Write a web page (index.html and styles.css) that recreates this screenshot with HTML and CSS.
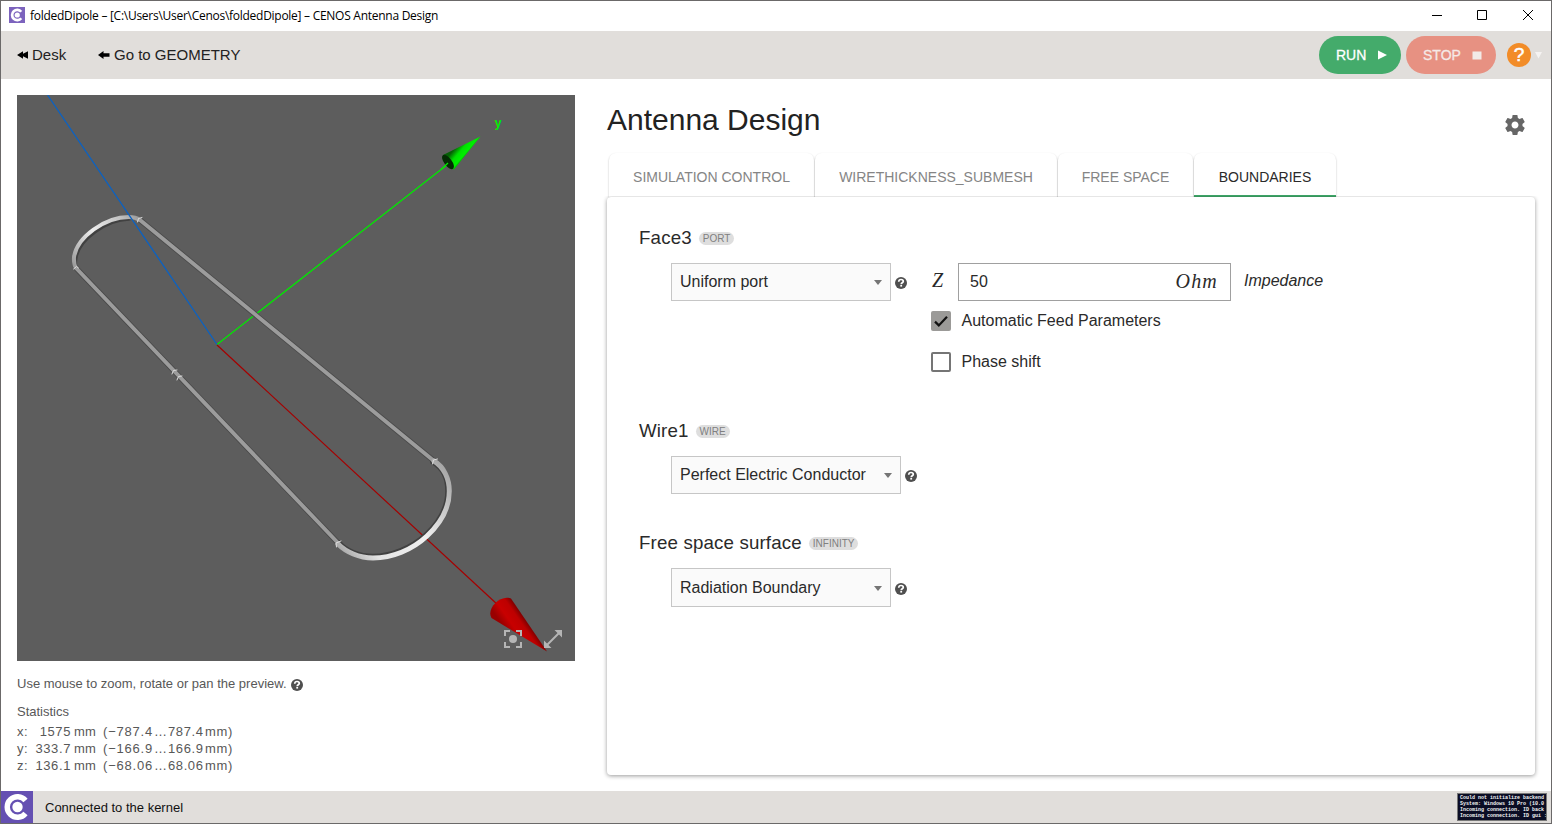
FILE: index.html
```html
<!DOCTYPE html>
<html lang="en">
<head>
<meta charset="utf-8">
<title>foldedDipole – CENOS Antenna Design</title>
<link rel="stylesheet" href="styles.css">
</head>
<body>
<svg class="defs" width="0" height="0">
  <symbol id="help" viewBox="0 0 12 12">
    <circle cx="6" cy="6" r="6" fill="#4f4f4f"/>
    <path d="M3.700 4.700C3.800 3.200 4.800 2.500 6 2.500c1.300 0 2.300.7 2.300 1.800 0 1.500-2.100 1.500-2.100 3" fill="none" stroke="#fff" stroke-width="1.700"/>
    <rect x="5.300" y="8" width="1.800" height="1.600" fill="#fff"/>
  </symbol>
  <symbol id="logo" viewBox="0 0 32 32">
    <path d="M24.500 9.500A10.300 10.300 0 1 0 24.500 22.500" fill="none" stroke="#fff" stroke-width="5.400"/>
    <circle cx="16.500" cy="16" r="5.200" fill="#fff"/>
  </symbol>
</svg>
<div class="window">
  <header class="titlebar">
    <svg class="app-icon" viewBox="0 0 32 32"><rect width="32" height="32" fill="#7c63bd"/><use href="#logo"/></svg>
    <span class="title">foldedDipole – [C:\Users\User\Cenos\foldedDipole] – CENOS Antenna Design</span>
    <svg class="win-buttons" width="103" height="12" viewBox="0 0 103 12" fill="none" stroke="#000">
      <path d="M0 6.500h10M45.500 1.500h9v9h-9zM91 1l10 10M101 1L91 11"/>
    </svg>
  </header>
  <nav class="toolbar">
    <a class="nav-link desk"><svg width="11" height="8" viewBox="0 0 11 8"><path d="M0 4L6 .3v2.400L11 .3v7.400L6 5.300v2.400z"/></svg>Desk</a>
    <a class="nav-link"><svg width="12" height="8" viewBox="0 0 12 8"><path d="M0 4L5.500 0v2.200H11.500v3.600H5.500V8z"/></svg>Go to GEOMETRY</a>
    <div class="actions">
      <button class="pill run">RUN<svg width="9" height="10" viewBox="0 0 9 10"><path d="M0 .5L9 5 0 9.500z" fill="#fff"/></svg></button>
      <button class="pill stop">STOP<svg width="10" height="9" viewBox="0 0 10 9"><path d="M.5.5h9v8h-9z" fill="#f2eae7"/></svg></button>
      <span class="help-badge">?</span>
      <svg class="caret" width="7" height="7" viewBox="0 0 7 7"><path d="M0 0h7L3.500 6.500z" fill="#f5f3f2"/></svg>
    </div>
  </nav>
  <main class="content">
    <aside class="preview">
      <svg class="scene" width="558" height="566" viewBox="17 95 558 566">
        <defs>
          <linearGradient id="arcA" x1="74" y1="268" x2="140" y2="218" gradientUnits="userSpaceOnUse"><stop offset="0" stop-color="#999"/><stop offset=".45" stop-color="#eee"/><stop offset=".8" stop-color="#c4c4c4"/><stop offset="1" stop-color="#999"/></linearGradient>
          <linearGradient id="arcB" x1="450" y1="470" x2="345" y2="560" gradientUnits="userSpaceOnUse"><stop offset="0" stop-color="#a4a4a4"/><stop offset=".45" stop-color="#f0f0f0"/><stop offset=".8" stop-color="#e4e4e4"/><stop offset="1" stop-color="#a4a4a4"/></linearGradient>
          <linearGradient id="coneG" x1="456" y1="147" x2="469" y2="158" gradientUnits="userSpaceOnUse"><stop offset="0" stop-color="#066006"/><stop offset=".35" stop-color="#00e000"/><stop offset=".65" stop-color="#00f000"/><stop offset="1" stop-color="#043f04"/></linearGradient>
          <linearGradient id="coneR" x1="503" y1="626" x2="526" y2="610" gradientUnits="userSpaceOnUse"><stop offset="0" stop-color="#900"/><stop offset=".3" stop-color="#c80000"/><stop offset=".6" stop-color="#bd0000"/><stop offset="1" stop-color="#3c0000"/></linearGradient>
        </defs>
        <rect x="17" y="95" width="558" height="566" fill="#5d5d5d"/>
        <path d="M217 344.500L452 161" stroke="#00ea00" stroke-width="1.300"/>
        <path d="M217 345L498 605" stroke="#a60000" stroke-width="1.200"/>
        <g fill="none" stroke-linecap="round">
          <g stroke="#414141" stroke-width="5.500">
            <path d="M140 220L434 461" stroke="#4a4a4a"/>
            <path d="M76 268L339 544" stroke="#4a4a4a"/>
            <path d="M75 266C74.500 263 75 260 75.500 257C79 239 106 219 129 218.500" stroke-width="4.500"/>
            <path d="M433 462C443 468 448 479 448 491C448 507 440 522 426 535C411 548.500 391 556.500 373 556.500C359 556.500 346 551 339 543"/>
          </g>
          <g stroke="#9c9c9c" stroke-width="3.900">
            <path d="M140 220L434 461"/>
            <path d="M76 268L339 544"/>
          </g>
          <path d="M76 268C74 265 73.700 262 74 257C77 237 105 217 129 217C133 217 137 218 140 220" stroke="url(#arcA)" stroke-width="4"/>
          <path d="M434 461C444 467 449.300 479 449.300 491C449.300 507 441 523 427 536C412 550 392 558 373 558C359 558 346 552 338 544" stroke="url(#arcB)" stroke-width="5"/>
          <path d="M137.500 222l1-3.500 3.500-1M73.500 269l3-2.500 2 1.500M172 374l1.500-3.500 3.500-.500M177 380l1.500-3.500 3.500-.5M432.500 464l1-4 4-1M336.500 547l-.5-4 5-2" stroke="#ddd" stroke-width="1"/>
        </g>
        <path d="M47.500 95L217 344.500" stroke="#0a62c4" stroke-width="1.300"/>
        <path d="M443 155L480.500 136.500 454 169.500C449 169 442 161 443 155z" fill="url(#coneG)"/>
        <ellipse cx="448" cy="162" rx="3.800" ry="8.600" transform="rotate(-37 448 162)" fill="#032c03"/>
        <path d="M441 169.500L448 163" stroke="#00ea00" stroke-width="1.300"/>
        <path d="M491.500 618C486 609 500 594 511 598.500L547 651.500z" fill="url(#coneR)"/>
        <text class="axis-label" x="494.500" y="127">y</text>
        <g fill="none" stroke="#b5b5b5" stroke-width="2">
          <path d="M505 636v-5h5M516 631h5v5M521 642v5h-5M510 647h-5v-5"/>
          <path d="M547 645L559 633"/>
        </g>
        <circle cx="513" cy="639" r="4" fill="#b5b5b5"/>
        <path d="M554.500 630h7.500v7.500zM544 640.500v7.500h7.500z" fill="#b5b5b5"/>
      </svg>
      <p class="hint">Use mouse to zoom, rotate or pan the preview.<svg width="12" height="12"><use href="#help"/></svg></p>
      <p class="stats-title">Statistics</p>
      <div class="stats">
        <span>x:</span><b>1575</b><i>mm</i><span class="from">(−787.4</span><span>…</span><span>787.4</span><span class="unit">mm)</span>
        <span>y:</span><b>333.7</b><i>mm</i><span class="from">(−166.9</span><span>…</span><span>166.9</span><span class="unit">mm)</span>
        <span>z:</span><b>136.1</b><i>mm</i><span class="from">(−68.06</span><span>…</span><span>68.06</span><span class="unit">mm)</span>
      </div>
    </aside>
    <section class="settings">
      <div class="heading">
        <h1>Antenna Design</h1>
        <svg class="gear" width="24" height="24" viewBox="0 0 24 24"><path fill="#666" d="M19.430 12.980c.040-.320.070-.640.070-.980s-.030-.660-.070-.980l2.110-1.650c.190-.150.240-.420.120-.640l-2-3.460c-.120-.220-.390-.300-.610-.220l-2.490 1c-.520-.400-1.080-.730-1.690-.980l-.380-2.650C14.460 2.180 14.250 2 14 2h-4c-.250 0-.460.180-.490.420l-.380 2.650c-.610.250-1.170.590-1.690.980l-2.490-1c-.230-.090-.490 0-.610.220l-2 3.460c-.130.220-.070.490.120.640l2.110 1.650c-.040.320-.070.650-.070.980s.030.660.070.980l-2.110 1.650c-.190.150-.240.420-.120.640l2 3.460c.120.220.390.300.610.220l2.490-1c.520.400 1.080.730 1.690.980l.380 2.650c.030.240.240.420.490.420h4c.250 0 .460-.180.490-.420l.380-2.650c.610-.250 1.170-.590 1.690-.980l2.490 1c.230.090.490 0 .610-.220l2-3.460c.120-.220.070-.490-.120-.640l-2.110-1.650zM12 15.500c-1.930 0-3.500-1.570-3.500-3.500s1.570-3.500 3.500-3.500 3.500 1.570 3.500 3.500-1.570 3.500-3.500 3.500z"/></svg>
      </div>
      <div class="tabs">
        <div class="tab">SIMULATION CONTROL</div>
        <div class="tab">WIRETHICKNESS_SUBMESH</div>
        <div class="tab">FREE SPACE</div>
        <div class="tab active">BOUNDARIES</div>
      </div>
      <div class="card">
        <section class="group port">
          <h3>Face3<span class="tag">PORT</span></h3>
          <div class="fields">
            <div class="select">Uniform port<span class="arrow"></span></div>
            <svg class="info" width="12" height="12"><use href="#help"/></svg>
            <div class="params">
              <div class="impedance"><span class="math">Z</span><div class="input"><span>50</span><span class="math ohm">Ohm</span></div><em>Impedance</em></div>
              <label class="check"><span class="box on"><svg width="20" height="20" viewBox="0 0 20 20"><path d="M4 10.600l3.800 3.800L16 5.800" fill="none" stroke="#111" stroke-width="2.200"/></svg></span>Automatic Feed Parameters</label>
              <label class="check"><span class="box"></span>Phase shift</label>
            </div>
          </div>
        </section>
        <section class="group wire">
          <h3>Wire1<span class="tag">WIRE</span></h3>
          <div class="fields">
            <div class="select wide">Perfect Electric Conductor<span class="arrow"></span></div>
            <svg class="info" width="12" height="12"><use href="#help"/></svg>
          </div>
        </section>
        <section class="group surface">
          <h3>Free space surface<span class="tag">INFINITY</span></h3>
          <div class="fields">
            <div class="select tall">Radiation Boundary<span class="arrow"></span></div>
            <svg class="info" width="12" height="12"><use href="#help"/></svg>
          </div>
        </section>
      </div>
    </section>
  </main>
  <footer class="statusbar">
    <svg width="32" height="32" viewBox="0 0 32 32"><rect width="32" height="32" fill="#6550b2"/><use href="#logo"/></svg>
    <span class="status">Connected to the kernel</span>
    <div class="console"><div>Could not initialize backend</div><div>System: Windows 10 Pro (10.0</div><div>Incoming connection. ID back</div><div>Incoming connection. ID gui :</div></div>
  </footer>
</div>
</body>
</html>
```

FILE: styles.css
```css
* { box-sizing: border-box; }
body { margin: 0; width: 1552px; height: 824px; overflow: hidden; font-family: "Liberation Sans", Arial, sans-serif; color: #2a2a2a; }
h1, h3, p { margin: 0; font-weight: 400; }
.defs { display: block; }
svg { flex: none; }
.window { width: 1552px; height: 824px; border: 1px solid #6b6969; background: #fff; display: flex; flex-direction: column; }
.titlebar { height: 30px; flex: none; display: flex; align-items: center; padding: 0 16px 2px 8px; }
.app-icon { width: 16px; height: 16px; }
.title { margin: 1px 0 0 5px; font: 12px "Open Sans", "Noto Sans", sans-serif; letter-spacing: -.27px; color: #000; white-space: nowrap; }
.win-buttons { margin-left: auto; }
.toolbar { height: 48px; flex: none; display: flex; align-items: center; background: #e1dedb; padding: 0 9px 0 16px; font-size: 15px; color: #222; }
.nav-link { display: flex; align-items: center; gap: 4px; margin-top: -2px; }
.nav-link svg { margin-top: 1px; }
.desk { width: 81px; }
.actions { margin-left: auto; display: flex; align-items: center; }
.pill { height: 38px; border: 0; border-radius: 19px; font: 500 14px "Liberation Sans", sans-serif; color: #fff; display: flex; align-items: center; padding: 0 0 0 17px; -webkit-text-stroke: .3px currentColor; }
.run { width: 82px; background: #44ab6b; gap: 12px; }
.stop { width: 90px; margin-left: 5px; background: #e79182; gap: 11px; color: #f5e9e6; }
.help-badge { width: 24px; height: 24px; margin-left: 11px; border-radius: 50%; background: #f28c28; color: #fff; font-size: 19px; line-height: 24px; text-align: center; -webkit-text-stroke: .5px #fff; }
.caret { margin-left: 4px; }
.content { flex: 1; display: flex; padding: 16px; gap: 32px; }
.preview { width: 558px; font-size: 13px; color: #585858; }
.scene { display: block; }
.axis-label { font: bold 12px "Liberation Mono", monospace; fill: #00f000; }
.hint { display: flex; align-items: center; gap: 4px; height: 16px; margin-top: 15px; padding-bottom: 1px; }
.hint svg { margin-top: 2px; }
.stats-title { margin-top: 12px; height: 16px; line-height: 16px; }
.stats { margin-top: 3px; display: grid; grid-template-columns: 13px 41px 32px 51px 14px 37px 30px; grid-auto-rows: 17px; line-height: 17px; letter-spacing: .6px; white-space: nowrap; }
.stats b { font-weight: 400; text-align: right; }
.stats i { font-style: normal; padding-left: 3px; letter-spacing: .2px; }
.stats .from { letter-spacing: .8px; }
.stats .unit { letter-spacing: .7px; }
.settings { width: 928px; display: flex; flex-direction: column; }
.heading { height: 58px; display: flex; justify-content: space-between; padding: 7px 8px 0 0; }
h1 { font-size: 30px; line-height: 35px; color: #222; }
.gear { margin-top: 11px; }
.tabs { display: flex; gap: 1px; padding-left: 2px; height: 44px; }
.tab { height: 44px; width: 205px; border-radius: 7px 7px 0 0; background: #fff; box-shadow: 0 1px 2px rgba(0,0,0,.28); font-size: 14px; line-height: 48px; text-align: center; color: #858585; }
.tab:nth-child(2) { width: 242px; }
.tab:nth-child(3) { width: 135px; }
.tab:nth-child(4) { width: 142px; }
.tab.active { color: #2a2a2a; border-bottom: 2px solid #3da366; }
.card { height: 578px; background: #fff; border-radius: 4px; box-shadow: 0 1px 4px rgba(0,0,0,.4); clip-path: inset(-1px -6px -8px -6px); padding: 29px 32px; }
.group.port { height: 193px; }
.group.wire { height: 112px; }
h3 { font-size: 18.720px; line-height: 24px; height: 24px; display: flex; align-items: center; letter-spacing: .15px; }
.tag { margin: 1px 0 0 7px; height: 13px; border-radius: 7px; padding: 0 4px; background: #dedede; color: #808080; font-size: 10px; line-height: 13px; letter-spacing: 0; }
.fields { display: flex; margin: 13px 0 0 32px; font-size: 16px; }
.select { width: 220px; height: 38px; border: 1px solid #c6c6c6; background: #fafafa; display: flex; align-items: center; justify-content: space-between; padding: 0 8px; }
.wide { width: 230px; }
.tall { height: 39px; }
.arrow { border: 4.500px solid transparent; border-top: 5px solid #757575; border-bottom: 0; margin-top: 1px; }
.info { margin: 14px 0 0 4px; }
.surface .info { margin-top: 15px; }
.params { margin-left: 24px; }
.impedance { display: flex; height: 38px; align-items: center; }
.math { font: italic 20px "Liberation Serif", serif; width: 27px; padding-left: 1px; line-height: 32px; height: 36px; }
.input { width: 273px; height: 38px; border: 1px solid #a0a0a0; display: flex; align-items: center; justify-content: space-between; padding: 0 12px 0 11px; }
.ohm { width: auto; letter-spacing: 1.200px; padding-top: 1px; }
.impedance em { margin: -3px 0 0 13px; }
.check { display: flex; align-items: center; gap: 10.500px; height: 41px; margin-top: -1px; line-height: 20px; }
.check + .check { margin-top: 0; }
.box { width: 20px; height: 20px; border: 2px solid #757575; border-radius: 2px; margin-top: 1px; }
.box.on { border: 0; background: #9b9a98; }
.box svg { display: block; }
.statusbar { height: 32px; flex: none; display: flex; align-items: center; background: #e1dedb; padding-right: 4px; }
.status { margin-left: 12px; font-size: 13px; color: #111; }
.console { margin-left: auto; width: 90px; height: 28px; border: 1px solid #777; background: #0b0d24; color: #f4f4f4; padding: 1px 0 0 2px; overflow: hidden; white-space: pre; font: bold 5px/6px "Liberation Mono", monospace; }
```
